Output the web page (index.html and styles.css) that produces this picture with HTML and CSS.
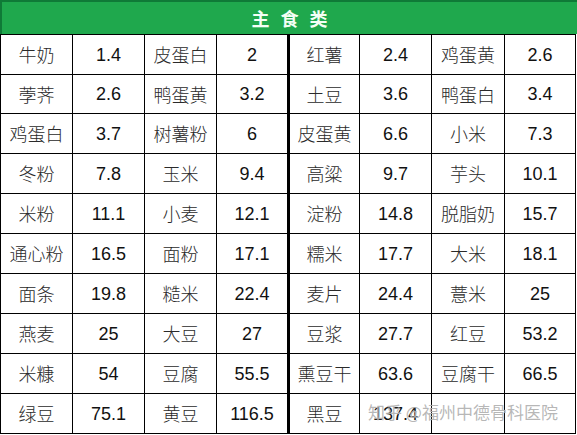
FILE: index.html
```html
<!DOCTYPE html>
<html lang="zh">
<head>
<meta charset="utf-8">
<title>主食类</title>
<link rel="stylesheet" href="styles.css">
</head>
<body>
<div class="sheet">
  <div class="header">主食类</div>
  <div class="grid">
    <div class="c name">牛奶</div><div class="c num">1.4</div><div class="c name">皮蛋白</div><div class="c num mid">2</div><div class="c name">红薯</div><div class="c num">2.4</div><div class="c name">鸡蛋黄</div><div class="c num">2.6</div>
    <div class="c name">荸荠</div><div class="c num">2.6</div><div class="c name">鸭蛋黄</div><div class="c num mid">3.2</div><div class="c name">土豆</div><div class="c num">3.6</div><div class="c name">鸭蛋白</div><div class="c num">3.4</div>
    <div class="c name">鸡蛋白</div><div class="c num">3.7</div><div class="c name">树薯粉</div><div class="c num mid">6</div><div class="c name">皮蛋黄</div><div class="c num">6.6</div><div class="c name">小米</div><div class="c num">7.3</div>
    <div class="c name">冬粉</div><div class="c num">7.8</div><div class="c name">玉米</div><div class="c num mid">9.4</div><div class="c name">高粱</div><div class="c num">9.7</div><div class="c name">芋头</div><div class="c num">10.1</div>
    <div class="c name">米粉</div><div class="c num">11.1</div><div class="c name">小麦</div><div class="c num mid">12.1</div><div class="c name">淀粉</div><div class="c num">14.8</div><div class="c name">脱脂奶</div><div class="c num">15.7</div>
    <div class="c name">通心粉</div><div class="c num">16.5</div><div class="c name">面粉</div><div class="c num mid">17.1</div><div class="c name">糯米</div><div class="c num">17.7</div><div class="c name">大米</div><div class="c num">18.1</div>
    <div class="c name">面条</div><div class="c num">19.8</div><div class="c name">糙米</div><div class="c num mid">22.4</div><div class="c name">麦片</div><div class="c num">24.4</div><div class="c name">薏米</div><div class="c num">25</div>
    <div class="c name">燕麦</div><div class="c num">25</div><div class="c name">大豆</div><div class="c num mid">27</div><div class="c name">豆浆</div><div class="c num">27.7</div><div class="c name">红豆</div><div class="c num">53.2</div>
    <div class="c name">米糠</div><div class="c num">54</div><div class="c name">豆腐</div><div class="c num mid">55.5</div><div class="c name">熏豆干</div><div class="c num">63.6</div><div class="c name">豆腐干</div><div class="c num">66.5</div>
    <div class="c name">绿豆</div><div class="c num">75.1</div><div class="c name">黄豆</div><div class="c num mid">116.5</div><div class="c name">黑豆</div><div class="c num">137.4</div><div class="c name"></div><div class="c num"></div>
  </div>
  <div class="watermark">知乎 @福州中德骨科医院</div>
</div>
</body>
</html>
```

FILE: styles.css
```css
html, body {
  margin: 0;
  padding: 0;
  background: #ffffff;
}

.sheet {
  position: relative;
  width: 577px;
  height: 435px;
  overflow: hidden;
  background: #ffffff;
}

.header {
  box-sizing: border-box;
  height: 34px;
  background: #1fa84d;
  border-top: 2px solid #0f7a37;
  border-left: 2px solid #0f7a37;
  color: #f4fff6;
  font-family: "Noto Sans CJK SC", "Noto Sans", sans-serif;
  font-size: 18px;
  font-weight: 700;
  letter-spacing: 11px;
  padding-left: 11px;
  display: flex;
  align-items: center;
  justify-content: center;
  line-height: 1;
}

.grid {
  display: grid;
  width: 576px;
  box-sizing: border-box;
  border-left: 1px solid #000;
  border-top: 1px solid #000;
  grid-template-columns: 72px 72px 72px 73px 70px 72px 73px 71px;
  grid-template-rows: 40px 39px repeat(8, 40px);
}

.c {
  box-sizing: border-box;
  border-right: 1px solid #000;
  border-bottom: 1px solid #000;
  display: flex;
  align-items: center;
  justify-content: center;
  font-size: 18px;
  line-height: 1;
}

.c.mid {
  border-right: 3px solid #000;
}

.name {
  font-family: "Noto Sans CJK SC", "Noto Sans", sans-serif;
  font-weight: 300;
  color: #2a2a2a;
  padding-bottom: 1px;
}

.num {
  font-family: "Liberation Sans", Arial, sans-serif;
  color: #111111;
}

.watermark {
  position: absolute;
  left: 368px;
  top: 402px;
  font-family: "Noto Sans CJK SC", "Noto Sans", sans-serif;
  font-size: 17px;
  line-height: 20px;
  color: rgba(160, 160, 160, 0.75);
  text-shadow: 0 0 1px rgba(255, 255, 255, 0.8);
  white-space: nowrap;
}
```
